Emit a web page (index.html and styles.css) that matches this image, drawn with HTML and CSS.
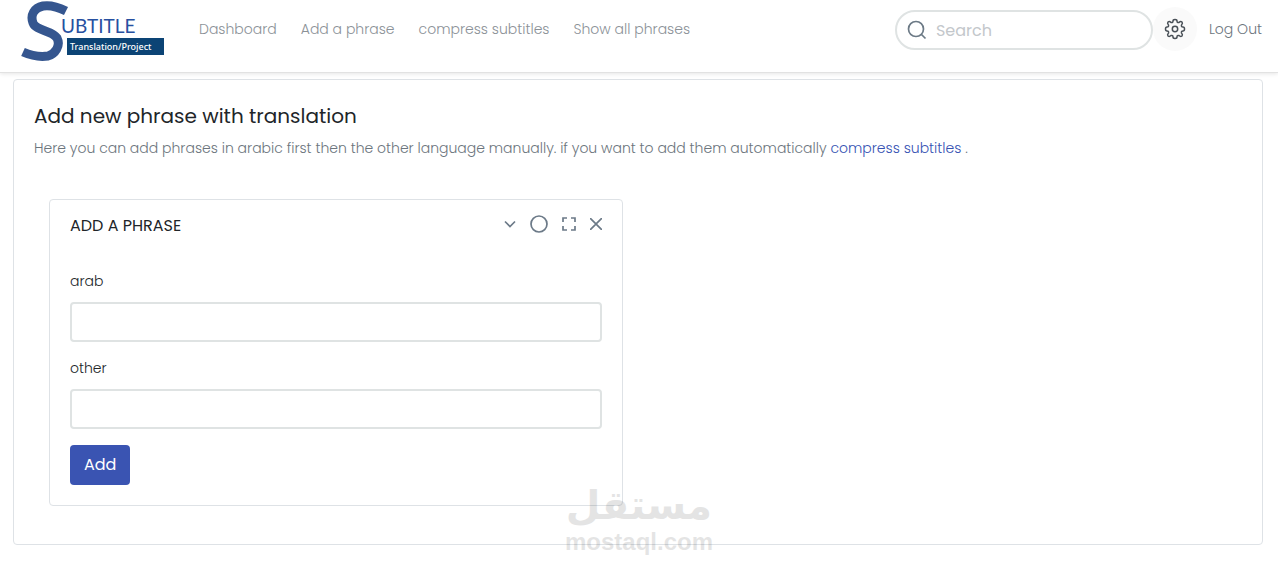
FILE: index.html
```
<!DOCTYPE html>
<html lang="en">
<head>
    <meta charset="UTF-8">
    <meta name="viewport" content="width=device-width, initial-scale=1.0">
    <title>Subtitle Translation Project</title>
    <link rel="stylesheet" href="styles.css">
</head>
<body>
    <header class="navbar">
        <a class="logo" href="#" aria-label="Subtitle Translation/Project">
            <svg width="144" height="62" viewBox="0 0 144 62">
                <path d="M45 11C35 6 28 5 22 6C13 8 9 15 12 23C15 31 31 30 36 38C40 46 34 54 27 56C20 57 11 56 2 52" fill="none" stroke="#35568f" stroke-width="9"/>
                <text class="logo-title" x="40" y="33">UBTITLE</text>
                <rect x="46" y="38" width="97" height="17" fill="#0c4475"/>
                <text class="logo-sub" x="49" y="50">Translation/Project</text>
            </svg>
        </a>
        <nav class="menu">
            <a href="#">Dashboard</a>
            <a href="#">Add a phrase</a>
            <a href="#">compress subtitles</a>
            <a href="#">Show all phrases</a>
        </nav>
        <form class="search">
            <svg width="20" height="20" viewBox="0 0 20 20" fill="none" stroke="#6c7a86" stroke-width="1.7">
                <circle cx="9" cy="9" r="7.500"/>
                <path d="M14.500 14.500l4 4"/>
            </svg>
            <input type="search" placeholder="Search" aria-label="Search">
        </form>
        <button class="settings" type="button" aria-label="Settings">
            <svg width="24" height="24" viewBox="0 0 24 24" fill="none" stroke="#495057" stroke-width="1.500" stroke-linejoin="round">
                <circle cx="12" cy="12" r="2.700"/>
                <path d="M10 4Q10 2.500 12 2.500Q14 2.500 14 4Q14 6 16 5.500Q17.500 4 19 5Q20 6.500 18.500 8Q18 10 20 10Q21.500 10 21.500 12Q21.500 14 20 14Q18 14 18.500 16Q20 17.500 19 19Q17.500 20 16 18.500Q14 18 14 20Q14 21.500 12 21.500Q10 21.500 10 20Q10 18 8 18.500Q6.500 20 5 19Q4 17.500 5.500 16Q6 14 4 14Q2.500 14 2.500 12Q2.500 10 4 10Q6 10 5.500 8Q4 6.500 5 5Q6.500 4 8 5.500Q10 6 10 4Z"/>
            </svg>
        </button>
        <a class="logout" href="#">Log Out</a>
    </header>

    <main class="card">
        <h1>Add new phrase with translation</h1>
        <p class="description">Here you can add phrases in arabic first then the other language manually. if you want to add them automatically <a href="#">compress subtitles</a> .</p>

        <section class="panel">
            <div class="panel-header">
                <h2>Add a phrase</h2>
                <div class="panel-tools">
                    <button type="button" aria-label="Collapse">
                        <svg width="14" height="14" viewBox="0 0 14 14"><path d="M2 4.500l5 5 5-5"/></svg>
                    </button>
                    <button type="button" aria-label="Refresh">
                        <svg width="18" height="18" viewBox="0 0 18 18"><circle cx="9" cy="9" r="8"/></svg>
                    </button>
                    <button type="button" aria-label="Full screen">
                        <svg width="16" height="16" viewBox="0 0 16 16"><path d="M2 6V2h4M10 2h4v4M14 10v4h-4M6 14H2v-4"/></svg>
                    </button>
                    <button type="button" aria-label="Close">
                        <svg width="12" height="12" viewBox="0 0 12 12"><path d="M0 0l12 12M12 0L0 12"/></svg>
                    </button>
                </div>
            </div>
            <form>
                <label for="arab">arab</label>
                <input type="text" id="arab">
                <label for="other">other</label>
                <input type="text" id="other">
                <button class="button" type="submit">Add</button>
            </form>
        </section>
    </main>

    <div class="watermark">
        <span class="mark-arabic" lang="ar">مستقل</span>
        <span class="mark-latin">mostaql.com</span>
    </div>
</body>
</html>
```

FILE: styles.css
```
* {
    box-sizing: border-box;
}
body {
    margin: 0;
    font-family: Poppins, Inter, sans-serif;
    font-size: 14px;
    font-weight: 300;
    line-height: 24px;
    color: #212529;
    background-color: #fff;
}
a {
    color: #3652b3;
    text-decoration: none;
}
button,
input {
    font-family: inherit;
}
.navbar {
    display: flex;
    align-items: flex-start;
    height: 73px;
    padding: 0 16px 0 21px;
    border-bottom: 1px solid #e2e2e2;
    box-shadow: 0 1px 4px rgba(0, 0, 0, 0.1);
}
.logo svg {
    display: block;
}
.logo-title {
    font-family: Lato, sans-serif;
    font-size: 19px;
    font-weight: 400;
    fill: #2750a0;
}
.logo-sub {
    font-family: "Noto Sans", sans-serif;
    font-size: 9px;
    font-weight: 500;
    fill: #fff;
}
.menu {
    display: flex;
    gap: 24px;
    margin: 17px auto 0 34px;
}
.menu a {
    color: #8b9197;
}
.search {
    display: flex;
    align-items: center;
    gap: 9px;
    width: 258px;
    height: 40px;
    margin-top: 10px;
    padding: 0 10px;
    border: 2px solid #dfe3e3;
    border-radius: 20px;
}
.search input {
    flex: 1;
    min-width: 0;
    padding: 0;
    border: none;
    outline: none;
    background: none;
    font-size: 16px;
}
.search input::placeholder {
    color: #c3c7cb;
}
.settings {
    display: flex;
    align-items: center;
    justify-content: center;
    width: 44px;
    height: 44px;
    margin-top: 7px;
    padding: 0;
    border: none;
    border-radius: 50%;
    background-color: #fafafa;
}
.logout {
    margin: 17px 0 0 12px;
    color: #6c757d;
}
.card {
    margin: 6px 15px 0 13px;
    padding: 24px 20px 38px;
    border: 1px solid #dee2e6;
    border-radius: 4px;
}
h1 {
    margin: 0;
    font-size: 20px;
    font-weight: 400;
}
.description {
    margin: 8px 0 39px;
    color: #6c757d;
}
.panel {
    width: calc(50% - 30px);
    margin-left: 15px;
    padding: 12px 20px 20px;
    border: 1px solid #dee2e6;
    border-radius: 4px;
}
.panel-header {
    display: flex;
    align-items: flex-start;
    justify-content: space-between;
    margin-bottom: 29px;
}
h2 {
    margin: 0;
    font-size: 16px;
    font-weight: 400;
    line-height: 28px;
    text-transform: uppercase;
}
.panel-tools {
    display: flex;
    align-items: center;
    gap: 13px;
    height: 24px;
}
.panel-tools button {
    display: flex;
    padding: 0;
    border: none;
    background: none;
}
.panel-tools svg {
    fill: none;
    stroke: #6c7a88;
    stroke-width: 1.7;
}
.panel label {
    display: block;
    margin-bottom: 9px;
}
.panel input {
    display: block;
    width: 100%;
    height: 40px;
    margin-bottom: 14px;
    padding: 8px 12px;
    border: 2px solid #dfe3e3;
    border-radius: 4px;
    font-size: 16px;
}
.button {
    height: 40px;
    margin-top: 2px;
    padding: 0 14px 2px;
    border: none;
    border-radius: 4px;
    background-color: #3a54b2;
    color: #fff;
    font-size: 16px;
    font-weight: 400;
}
.watermark {
    position: absolute;
    top: 482px;
    left: 0;
    right: 0;
    display: flex;
    flex-direction: column;
    align-items: center;
    color: #000;
    font-weight: 700;
    opacity: 0.1;
    pointer-events: none;
}
.mark-arabic {
    font-family: "DejaVu Sans", sans-serif;
    font-size: 40px;
    line-height: 46px;
}
.mark-latin {
    font-family: "Liberation Sans", sans-serif;
    font-size: 24px;
    line-height: 28px;
}
```
